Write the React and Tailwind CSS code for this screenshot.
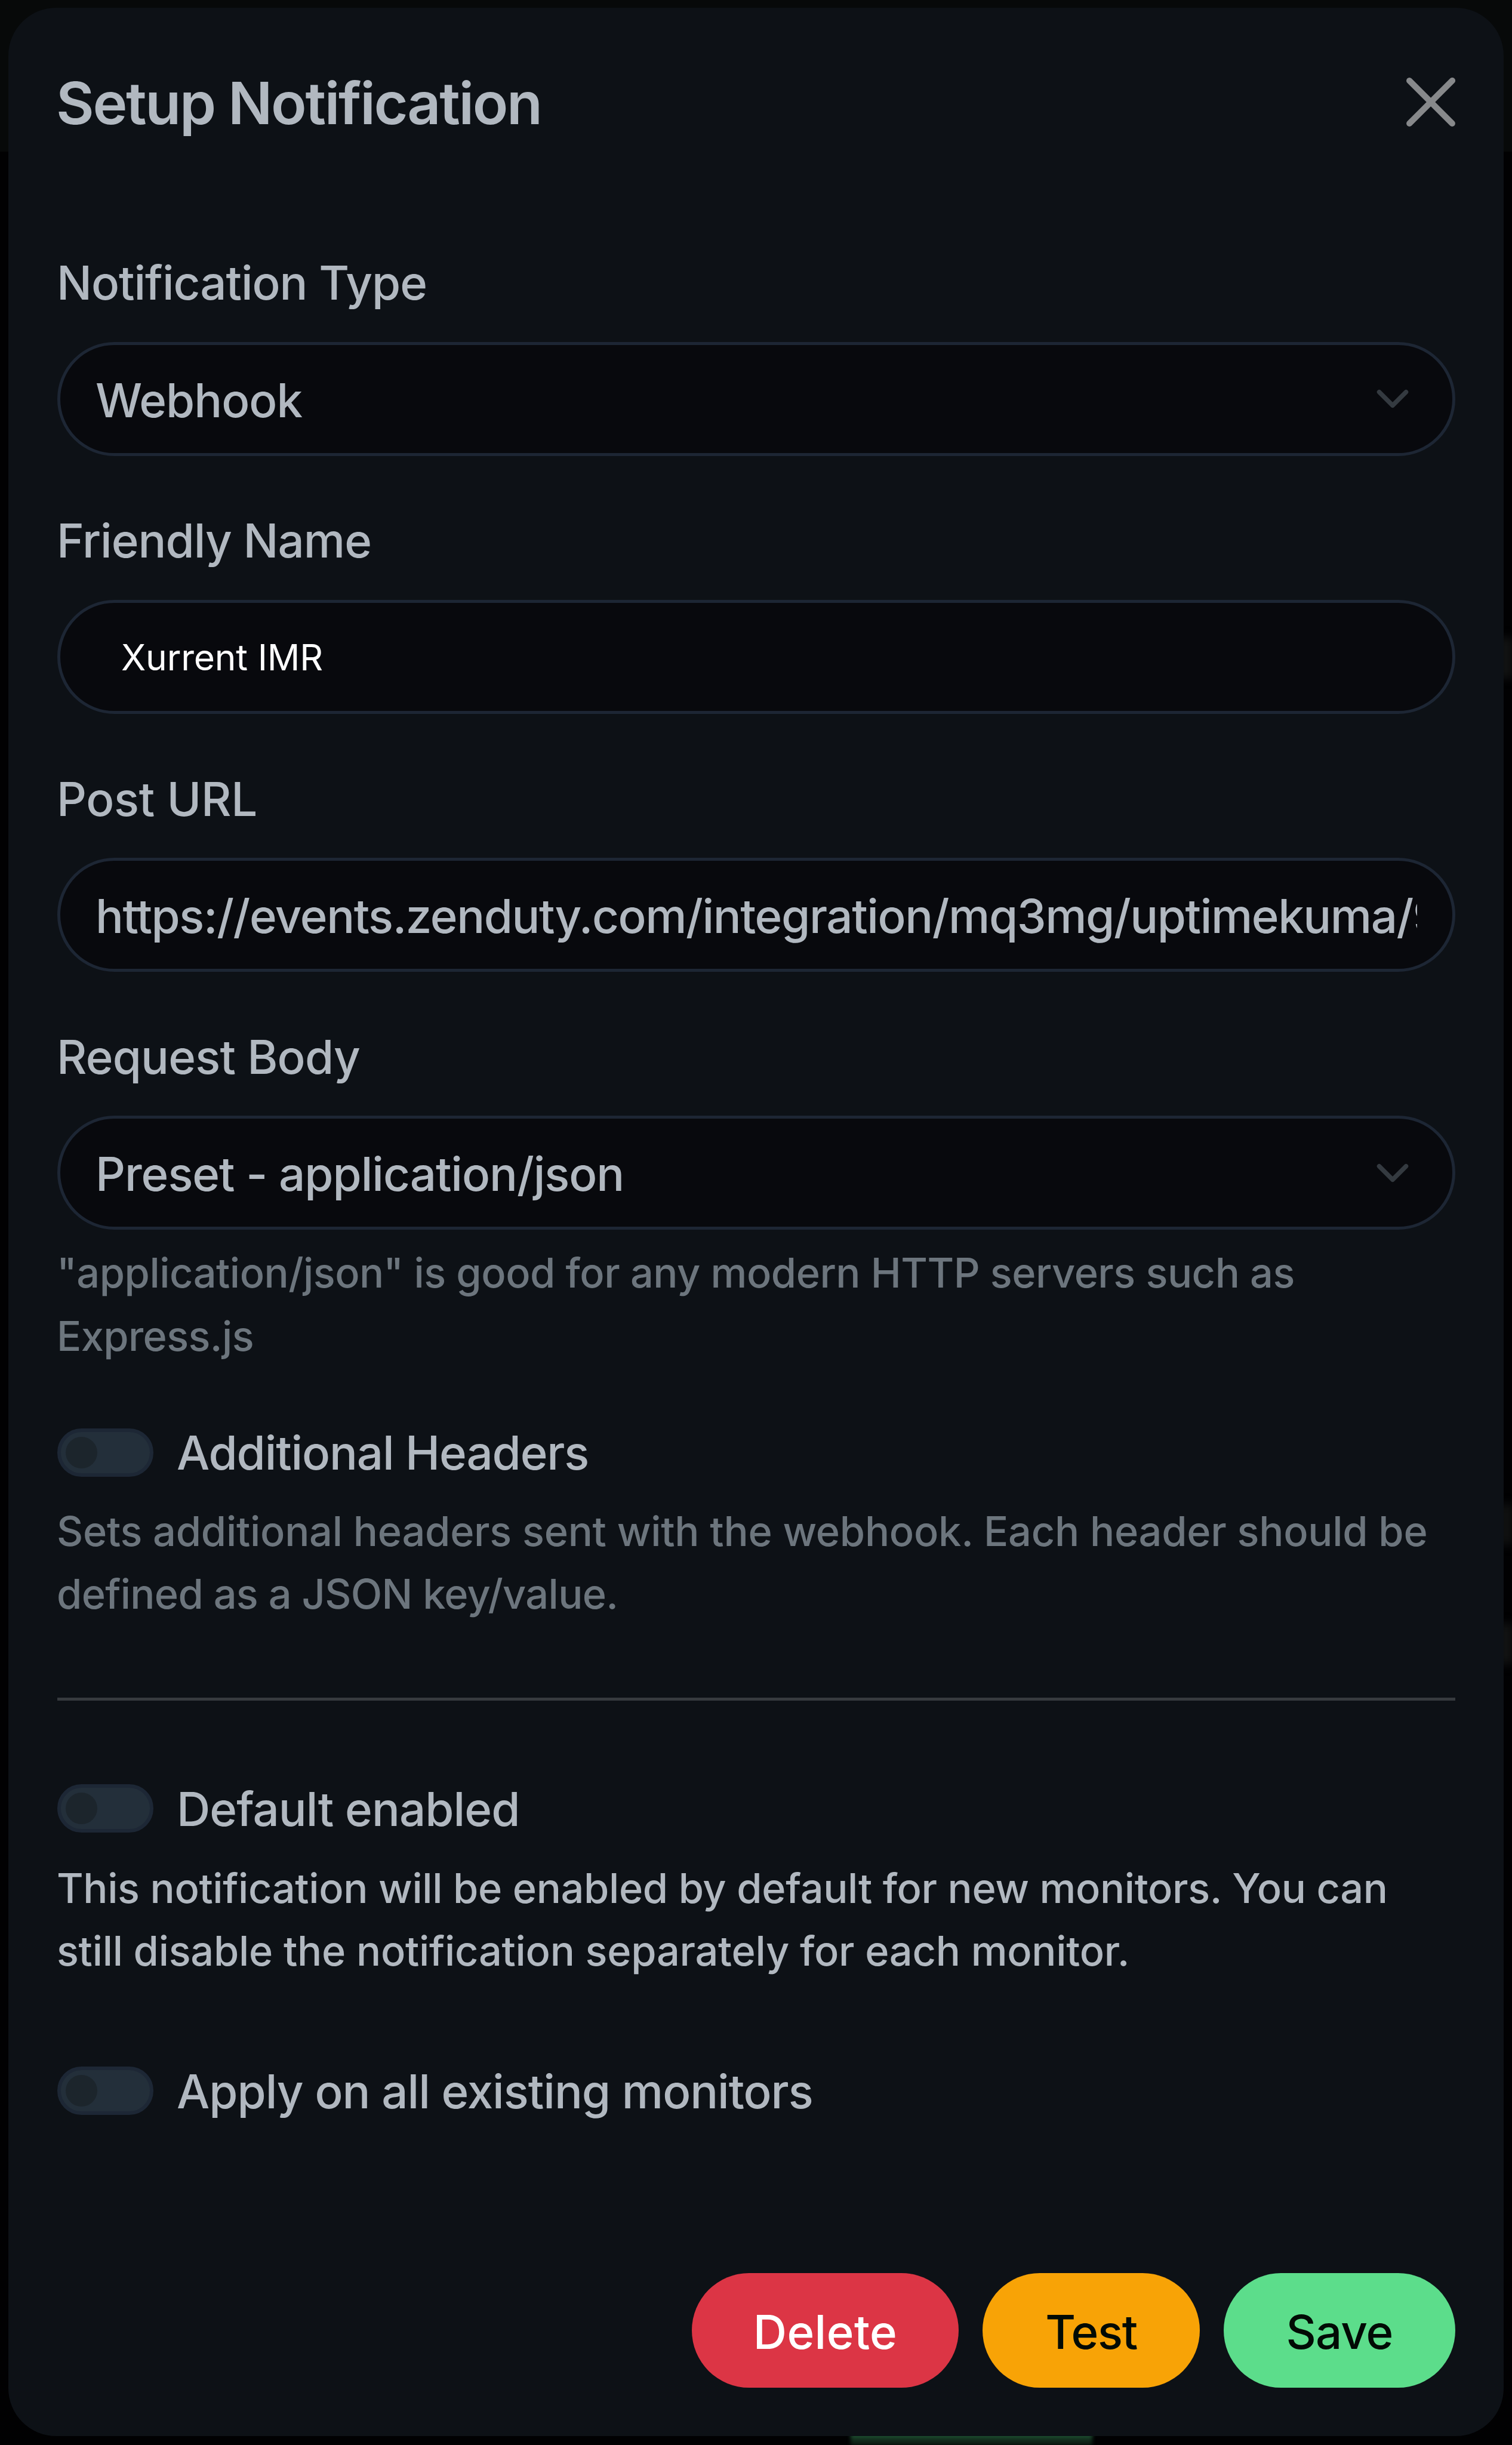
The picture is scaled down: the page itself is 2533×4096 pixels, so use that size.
import { useState } from 'react';

const CloseIcon = () => (
    <svg viewBox="0 0 16 16" className="size-[82px]" fill="#87898b">
        <path d="M.293.293a1 1 0 011.414 0L8 6.586 14.293.293a1 1 0 111.414 1.414L9.414 8l6.293 6.293a1 1 0 01-1.414 1.414L8 9.414l-6.293 6.293a1 1 0 01-1.414-1.414L6.586 8 .293 1.707a1 1 0 010-1.414z" />
    </svg>
);

const Chevron = () => (
    <svg viewBox="0 0 16 16" className="size-[60px]" fill="none" stroke="#343a40" strokeWidth="2" strokeLinecap="round" strokeLinejoin="round">
        <path d="m2 5 6 6 6-6" />
    </svg>
);

const Field = ({ label, labelClass = 'tracking-[-0.8px]', children }) => (
    <div className="mb-[82.8px]">
        <label className={`block h-[120px] -ml-px mb-[38.5px] leading-[120px] ${labelClass}`}>{label}</label>
        {children}
    </div>
);

const Select = ({ value, className }) => (
    <div className="h-[191px] rounded-full border-[5px] border-[#1d2634] bg-[#08090d] pl-[59px] pr-[70px] flex items-center justify-between">
        <span className={`relative top-0.5 ${className}`}>{value}</span>
        <Chevron />
    </div>
);

const Toggle = ({ label, className, checked, onChange }) => (
    <div className="h-[120px] flex items-center">
        <button
            type="button"
            role="switch"
            aria-checked={checked}
            onClick={() => onChange(!checked)}
            className={`w-[161px] h-[81px] -mt-px mr-[39px] px-2 rounded-full border-[6px] border-[#1d2735] bg-[#232f3a] flex items-center ${checked ? 'justify-end' : 'justify-start'}`}
        >
            <span className="size-[53px] rounded-full bg-[#1c252c]" />
        </button>
        <span className={className}>{label}</span>
    </div>
);

const App = () => {
    const [name, setName] = useState('Xurrent IMR');
    const [url, setUrl] = useState('https://events.zenduty.com/integration/mq3mg/uptimekuma/9');
    const [headers, setHeaders] = useState(false);
    const [isDefault, setIsDefault] = useState(false);
    const [applyExisting, setApplyExisting] = useState(false);

    return (
        <div className="relative w-[2533px] h-[4096px] overflow-hidden bg-[#010102] pt-[13px] pl-[14px] font-['Inter',sans-serif] font-[460] text-[78px] text-[#b1b8c0]">
            {/* Dimmed page behind the modal */}
            <div className="absolute inset-x-0 top-0 h-[254px] bg-[#070909]" />
            <div className="absolute right-0 top-[1068px] w-5 h-[68px] bg-[#151616] blur-[8px]" />
            <div className="absolute right-0 top-[2520px] w-5 h-[68px] bg-[#131414] blur-[8px]" />
            <div className="absolute right-0 top-[2720px] w-5 h-[68px] bg-[#151616] blur-[8px]" />
            <div className="absolute bottom-0 left-[1425px] w-[405px] h-5 bg-linear-to-b from-[#266b3f] to-[#10261a] to-60% blur-[3px]" />

            {/* Modal */}
            <div className="relative w-[2505px] h-[4068px] rounded-[80px] bg-[#0d1116] pt-[84px] pl-[82px] pr-[81px]">
                <div className="flex justify-between h-[150px] mb-[167px]">
                    <h5 className="-ml-0.5 pt-px text-[98px] leading-[150px] font-[560] tracking-[-2.35px]">Setup Notification</h5>
                    <button type="button" aria-label="Close" className="h-[82px] mt-[33px]">
                        <CloseIcon />
                    </button>
                </div>

                <Field label="Notification Type" labelClass="tracking-[-1.05px]">
                    <Select value="Webhook" className="tracking-[-1px]" />
                </Field>

                <Field label="Friendly Name" labelClass="tracking-[-1px]">
                    <input
                        type="text"
                        value={name}
                        onChange={(e) => setName(e.target.value)}
                        className="block w-full h-[191px] rounded-full border-[5px] border-[#1d2634] bg-[#08090d] pl-[102px] pr-[59px] pt-px font-[440] text-[60.5px] tracking-[-0.2px] text-white outline-none"
                    />
                </Field>

                <Field label="Post URL" labelClass="tracking-[-0.3px]">
                    <input
                        type="text"
                        value={url}
                        onChange={(e) => setUrl(e.target.value)}
                        className="block w-full h-[191px] rounded-full border-[5px] border-[#1d2634] bg-[#08090d] px-[59px] pt-1 tracking-[-1.43px] outline-none"
                    />
                </Field>

                <Field label="Request Body">
                    <Select value="Preset - application/json" className="tracking-[-1.05px]" />
                    <div className="-ml-px mt-5 text-[68.5px] leading-[105.2px] text-[#6c757d]">
                        <p className="tracking-[-0.5px]">"application/json" is good for any modern HTTP servers such as</p>
                        <p className="tracking-[-0.6px]">Express.js</p>
                    </div>
                </Field>

                <Toggle label="Additional Headers" className="tracking-[-1.15px]" checked={headers} onChange={setHeaders} />
                <div className="-ml-px mt-[19px] text-[68.5px] leading-[105.2px] text-[#6c757d]">
                    <p className="tracking-[-0.25px]">Sets additional headers sent with the webhook. Each header should be</p>
                    <p className="tracking-[-0.68px]">defined as a JSON key/value.</p>
                </div>

                <hr className="my-[121px] border-t-[5px] border-[#363a3e]" />

                <Toggle label="Default enabled" className="tracking-[-0.95px]" checked={isDefault} onChange={setIsDefault} />
                <div className="-ml-px mt-[21px] mb-[122px] text-[68.5px] leading-[105.2px]">
                    <p className="tracking-[-0.36px]">This notification will be enabled by default for new monitors. You can</p>
                    <p className="tracking-[-0.27px]">still disable the notification separately for each monitor.</p>
                </div>

                <Toggle label="Apply on all existing monitors" className="tracking-[-1.02px]" checked={applyExisting} onChange={setApplyExisting} />

                {/* Footer */}
                <div className="mt-[245px] flex justify-end gap-10">
                    <button type="button" className="w-[447px] h-[192px] pt-1 rounded-full bg-[#dc3545] text-white tracking-[0.4px]">Delete</button>
                    <button type="button" className="w-[364px] h-[192px] pt-1 rounded-full bg-[#f8a306] text-[#020b05] tracking-[-1.4px]">Test</button>
                    <button type="button" className="w-[388px] h-[192px] pt-1 rounded-full bg-[#5cdd8b] text-[#020b05] tracking-[-0.9px]">Save</button>
                </div>
            </div>
        </div>
    );
};

export default App;
